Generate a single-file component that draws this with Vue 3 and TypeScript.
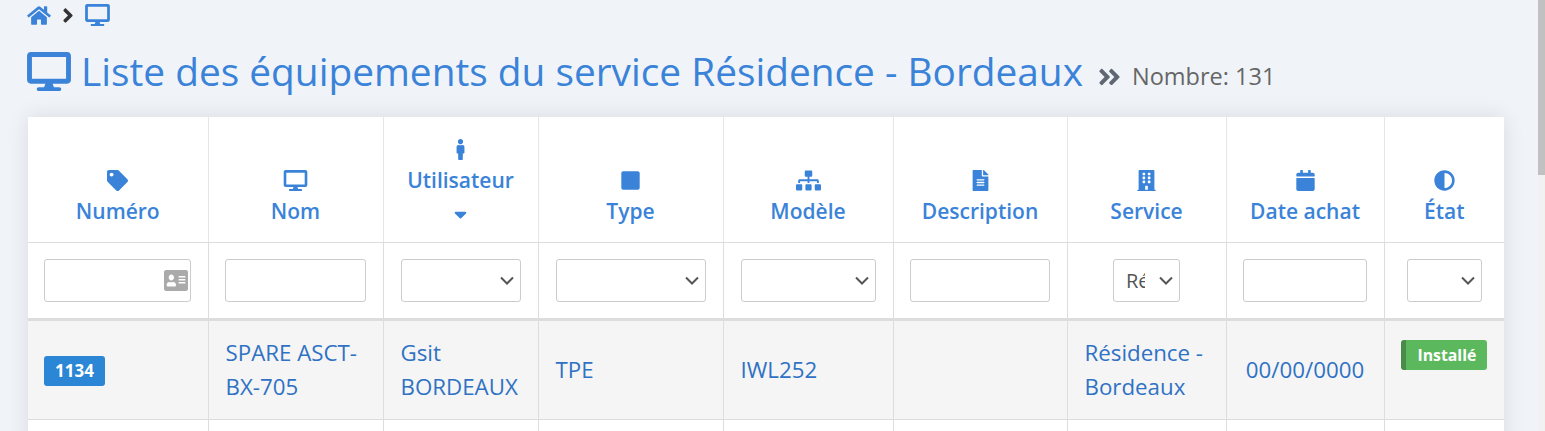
<script setup lang="ts">
interface Column {
  label: string
  width: number
  vb: string
  icon: string
  sorted?: boolean
}

const desktop =
  'M528 0H48C21.5 0 0 21.5 0 48v320c0 26.5 21.5 48 48 48h192l-16 48h-72c-13.3 0-24 10.7-24 24s10.7 24 24 24h272c13.3 0 24-10.7 24-24s-10.7-24-24-24h-72l-16-48h192c26.5 0 48-21.5 48-48V48c0-26.5-21.5-48-48-48zm-16 352H64V64h448v288z'
const home =
  'M280.37 148.26L96 300.11V464a16 16 0 0 0 16 16l112.06-.29a16 16 0 0 0 15.92-16V368a16 16 0 0 1 16-16h64a16 16 0 0 1 16 16v95.64a16 16 0 0 0 16 16.05L464 480a16 16 0 0 0 16-16V300L295.67 148.26a12.19 12.19 0 0 0-15.3 0zM571.6 251.47L488 182.56V44.05a12 12 0 0 0-12-12h-56a12 12 0 0 0-12 12v72.61L318.47 43a48 48 0 0 0-61 0L4.34 251.47a12 12 0 0 0-1.6 16.9l25.5 31A12 12 0 0 0 45.15 301l235.22-193.74a12.19 12.19 0 0 1 15.3 0L530.9 301a12 12 0 0 0 16.9-1.6l25.5-31a12 12 0 0 0-1.7-16.93z'
const angleRight =
  'M224.3 273l-136 136c-9.4 9.4-24.6 9.4-33.9 0l-22.6-22.6c-9.4-9.4-9.4-24.6 0-33.9l96.4-96.4-96.4-96.4c-9.4-9.4-9.4-24.6 0-33.9L54.3 103c9.4-9.4 24.6-9.4 33.9 0l136 136c9.5 9.4 9.5 24.6.1 34z'
const angleDouble =
  'M224.3 273l-136 136c-9.4 9.4-24.6 9.4-33.9 0l-22.6-22.6c-9.4-9.4-9.4-24.6 0-33.9l96.4-96.4-96.4-96.4c-9.4-9.4-9.4-24.6 0-33.9L54.3 103c9.4-9.4 24.6-9.4 33.9 0l136 136c9.5 9.4 9.5 24.6.1 34zm192-34l-136-136c-9.4-9.4-24.6-9.4-33.9 0l-22.6 22.6c-9.4 9.4-9.4 24.6 0 33.9l96.4 96.4-96.4 96.4c-9.4 9.4-9.4 24.6 0 33.9l22.6 22.6c9.4 9.4 24.6 9.4 33.9 0l136-136c9.4-9.2 9.4-24.4 0-33.8z'
const idCard =
  'M528 32H48C21.5 32 0 53.5 0 80v352c0 26.5 21.5 48 48 48h480c26.5 0 48-21.5 48-48V80c0-26.5-21.5-48-48-48zm-352 96c35.3 0 64 28.7 64 64s-28.7 64-64 64-64-28.7-64-64 28.7-64 64-64zm112 236.8c0 10.6-10 19.2-22.4 19.2H86.4C74 384 64 375.4 64 364.8v-19.2c0-31.8 30.1-57.6 67.2-57.6h5c12.3 5.1 25.7 8 39.8 8s27.6-2.9 39.8-8h5c37.1 0 67.2 25.8 67.2 57.6v19.2zM512 312c0 4.4-3.6 8-8 8H360c-4.4 0-8-3.6-8-8v-16c0-4.4 3.6-8 8-8h144c4.4 0 8 3.6 8 8v16zm0-64c0 4.4-3.6 8-8 8H360c-4.4 0-8-3.6-8-8v-16c0-4.4 3.6-8 8-8h144c4.4 0 8 3.6 8 8v16zm0-64c0 4.4-3.6 8-8 8H360c-4.4 0-8-3.6-8-8v-16c0-4.4 3.6-8 8-8h144c4.4 0 8 3.6 8 8v16z'
const caret = 'M41 288h238c21.4 0 32.1 25.9 17 41L177 448c-9.4 9.4-24.6 9.4-33.9 0L24 329c-15.1-15.1-4.4-41 17-41z'

const columns: Column[] = [
  {
    label: 'Numéro',
    width: 180,
    vb: '0 0 512 512',
    icon: 'M0 252.118V48C0 21.49 21.49 0 48 0h204.118a48 48 0 0 1 33.941 14.059l211.882 211.882c18.745 18.745 18.745 49.137 0 67.882L293.823 497.941c-18.745 18.745-49.137 18.745-67.882 0L14.059 286.059A48 48 0 0 1 0 252.118zM112 64c-26.51 0-48 21.49-48 48s21.49 48 48 48 48-21.49 48-48-21.49-48-48-48z',
  },
  { label: 'Nom', width: 175, vb: '0 0 576 512', icon: desktop },
  {
    label: 'Utilisateur',
    width: 155,
    vb: '0 0 192 512',
    sorted: true,
    icon: 'M96 0c35.346 0 64 28.654 64 64s-28.654 64-64 64-64-28.654-64-64S60.654 0 96 0m48 144h-11.36c-22.711 10.443-49.59 10.894-73.28 0H48c-26.51 0-48 21.49-48 48v136c0 13.255 10.745 24 24 24h16v136c0 13.255 10.745 24 24 24h64c13.255 0 24-10.745 24-24V352h16c13.255 0 24-10.745 24-24V192c0-26.51-21.49-48-48-48z',
  },
  {
    label: 'Type',
    width: 185,
    vb: '0 0 448 512',
    icon: 'M400 32H48C21.5 32 0 53.5 0 80v352c0 26.5 21.5 48 48 48h352c26.5 0 48-21.5 48-48V80c0-26.5-21.5-48-48-48z',
  },
  {
    label: 'Modèle',
    width: 170,
    vb: '0 0 640 512',
    icon: 'M128 352H32c-17.67 0-32 14.33-32 32v96c0 17.67 14.33 32 32 32h96c17.67 0 32-14.33 32-32v-96c0-17.67-14.33-32-32-32zm-24-80h192v48h48v-48h192v48h48v-57.59c0-21.17-17.23-38.41-38.41-38.41H344v-64h40c17.67 0 32-14.33 32-32V32c0-17.67-14.33-32-32-32H256c-17.67 0-32 14.33-32 32v96c0 17.67 14.33 32 32 32h40v64H94.41C73.23 224 56 241.23 56 262.41V320h48v-48zm264 80h-96c-17.67 0-32 14.33-32 32v96c0 17.67 14.33 32 32 32h96c17.67 0 32-14.33 32-32v-96c0-17.67-14.33-32-32-32zm240 0h-96c-17.67 0-32 14.33-32 32v96c0 17.67 14.33 32 32 32h96c17.67 0 32-14.33 32-32v-96c0-17.67-14.33-32-32-32z',
  },
  {
    label: 'Description',
    width: 174,
    vb: '0 0 384 512',
    icon: 'M224 136V0H24C10.7 0 0 10.7 0 24v464c0 13.3 10.7 24 24 24h336c13.3 0 24-10.7 24-24V160H248c-13.2 0-24-10.8-24-24zm64 236c0 6.6-5.4 12-12 12H108c-6.6 0-12-5.4-12-12v-8c0-6.6 5.4-12 12-12h168c6.6 0 12 5.4 12 12v8zm0-64c0 6.6-5.4 12-12 12H108c-6.6 0-12-5.4-12-12v-8c0-6.6 5.4-12 12-12h168c6.6 0 12 5.4 12 12v8zm0-72v8c0 6.6-5.4 12-12 12H108c-6.6 0-12-5.4-12-12v-8c0-6.6 5.4-12 12-12h168c6.6 0 12 5.4 12 12zm96-114.1v6.1H256V0h6.1c6.4 0 12.5 2.5 17 7l97.9 98c4.5 4.5 7 10.6 7 16.9z',
  },
  {
    label: 'Service',
    width: 159,
    vb: '0 0 448 512',
    icon: 'M436 480h-20V24c0-13.255-10.745-24-24-24H56C42.745 0 32 10.745 32 24v456H12c-6.627 0-12 5.373-12 12v20h448v-20c0-6.627-5.373-12-12-12zM128 76c0-6.627 5.373-12 12-12h40c6.627 0 12 5.373 12 12v40c0 6.627-5.373 12-12 12h-40c-6.627 0-12-5.373-12-12V76zm0 96c0-6.627 5.373-12 12-12h40c6.627 0 12 5.373 12 12v40c0 6.627-5.373 12-12 12h-40c-6.627 0-12-5.373-12-12v-40zm52 148h-40c-6.627 0-12-5.373-12-12v-40c0-6.627 5.373-12 12-12h40c6.627 0 12 5.373 12 12v40c0 6.627-5.373 12-12 12zm76 160h-64v-84c0-6.627 5.373-12 12-12h40c6.627 0 12 5.373 12 12v84zm64-172c0 6.627-5.373 12-12 12h-40c-6.627 0-12-5.373-12-12v-40c0-6.627 5.373-12 12-12h40c6.627 0 12 5.373 12 12v40zm0-96c0 6.627-5.373 12-12 12h-40c-6.627 0-12-5.373-12-12v-40c0-6.627 5.373-12 12-12h40c6.627 0 12 5.373 12 12v40zm0-96c0 6.627-5.373 12-12 12h-40c-6.627 0-12-5.373-12-12V76c0-6.627 5.373-12 12-12h40c6.627 0 12 5.373 12 12v40z',
  },
  {
    label: 'Date achat',
    width: 158,
    vb: '0 0 448 512',
    icon: 'M12 192h424c6.6 0 12 5.4 12 12v260c0 26.5-21.5 48-48 48H48c-26.5 0-48-21.5-48-48V204c0-6.6 5.4-12 12-12zm436-44v-36c0-26.5-21.5-48-48-48h-48V12c0-6.6-5.4-12-12-12h-40c-6.6 0-12 5.4-12 12v52H160V12c0-6.6-5.4-12-12-12h-40c-6.6 0-12 5.4-12 12v52H48C21.5 64 0 85.5 0 112v36c0 6.6 5.4 12 12 12h424c6.6 0 12-5.4 12-12z',
  },
  {
    label: 'État',
    width: 120,
    vb: '0 0 512 512',
    icon: 'M8 256c0 136.966 111.033 248 248 248s248-111.034 248-248S392.966 8 256 8 8 119.033 8 256zm248 184V72c101.705 0 184 82.311 184 184 0 101.705-82.311 184-184 184z',
  },
]
</script>

<template>
  <div class="page">
    <nav class="crumbs">
      <svg class="crumb-home" viewBox="0 0 576 512"><path :d="home" /></svg>
      <svg class="crumb-sep" viewBox="0 0 256 512"><path :d="angleRight" /></svg>
      <svg class="crumb-desk" viewBox="0 0 576 512"><path :d="desktop" /></svg>
    </nav>

    <div class="heading">
      <svg class="heading-icon" viewBox="0 0 576 512"><path :d="desktop" /></svg>
      <h1>Liste des équipements du service Résidence - Bordeaux</h1>
      <svg class="heading-sep" viewBox="0 0 448 512"><path :d="angleDouble" /></svg>
      <span class="count">Nombre: 131</span>
    </div>

    <div class="card">
      <table>
        <colgroup>
          <col v-for="col in columns" :key="col.label" :style="{ width: col.width + 'px' }" />
        </colgroup>
        <thead>
          <tr class="head-row">
            <th v-for="col in columns" :key="col.label">
              <span class="head-line">
                <svg class="head-icon" :viewBox="col.vb"><path :d="col.icon" /></svg>
              </span>
              <span class="head-line">{{ col.label }}</span>
              <span v-if="col.sorted" class="head-line">
                <svg class="sort-icon" viewBox="0 280 320 176"><path :d="caret" /></svg>
              </span>
            </th>
          </tr>
          <tr class="filter-row">
            <td>
              <div class="with-icon">
                <input type="text" />
                <svg class="id-icon" viewBox="0 32 576 448" preserveAspectRatio="none"><path :d="idCard" /></svg>
              </div>
            </td>
            <td><input type="text" /></td>
            <td><select><option></option></select></td>
            <td><select><option></option></select></td>
            <td><select><option></option></select></td>
            <td><input type="text" /></td>
            <td>
              <select class="narrow-service"><option>Résidence - Bordeaux</option></select>
            </td>
            <td><input type="text" /></td>
            <td><select class="narrow-state"><option></option></select></td>
          </tr>
        </thead>
        <tbody>
          <tr class="row-odd">
            <td><span class="num-badge">1134</span></td>
            <td><a>SPARE ASCT-BX-705</a></td>
            <td><a>Gsit BORDEAUX</a></td>
            <td><a>TPE</a></td>
            <td><a>IWL252</a></td>
            <td></td>
            <td><a>Résidence - Bordeaux</a></td>
            <td class="centered"><a>00/00/0000</a></td>
            <td class="state-cell"><span class="state-badge">Installé</span></td>
          </tr>
          <tr class="row-even">
            <td v-for="col in columns" :key="col.label"></td>
          </tr>
        </tbody>
      </table>
    </div>

    <div class="scrollbar"><div class="scrollbar-thumb"></div></div>
  </div>
</template>

<style>
html,
body {
  margin: 0;
  height: 431px;
  overflow: hidden;
  background: #f0f4f8;
}
</style>

<style scoped>
.page {
  padding: 4px 41px 0 28px;
  font-family: 'Open Sans', sans-serif;
  color: #3a83d8;
}

.crumbs {
  display: flex;
  align-items: center;
  height: 22px;
}

.crumbs svg {
  display: block;
  fill: #3a83d8;
}

.crumb-home {
  width: 24px;
  height: 21px;
  margin-left: -1px;
}

.crumbs .crumb-sep {
  width: 12px;
  height: 23px;
  margin-left: 11px;
  fill: #333;
}

.crumb-desk {
  width: 25px;
  height: 22px;
  margin-left: 11px;
}

.heading {
  display: flex;
  align-items: center;
  height: 50px;
  margin-top: 20px;
}

.heading-icon {
  width: 44px;
  height: 39px;
  margin-left: -1px;
  fill: #3a83d8;
}

h1 {
  margin: 0 0 0 10px;
  font-size: 38.8px;
  font-weight: 400;
  line-height: 50px;
  white-space: nowrap;
}

.heading-sep {
  width: 23px;
  height: 26px;
  margin: 11px 0 0 15px;
  fill: #5f6772;
}

.count {
  margin: 10px 0 0 11px;
  font-size: 23.5px;
  color: #666;
}

.card {
  margin-top: 21px;
  background: #fff;
  box-shadow: 0 0 20px rgba(0, 0, 0, 0.1);
}

table {
  width: 1476px;
  table-layout: fixed;
  border-collapse: collapse;
}

th,
td {
  padding: 16px 17px;
  border-right: 1px solid #ddd;
  box-sizing: border-box;
}

th:last-child,
td:last-child {
  border-right: none;
}

th {
  vertical-align: bottom;
  text-align: center;
  font-size: 21px;
  font-weight: 600;
  border-right-color: #e6e6e6;
  border-bottom: 1px solid #ddd;
}

.head-line {
  display: flex;
  align-items: center;
  justify-content: center;
  height: 31px;
  white-space: nowrap;
}

.head-icon {
  width: 25px;
  height: 21px;
  margin-top: 2px;
  fill: #3a83d8;
}

.sort-icon {
  width: 13px;
  height: 8px;
  margin-top: 8px;
  fill: #3a83d8;
}

.filter-row td {
  height: 76px;
  text-align: center;
  border-bottom: 3px solid #ddd;
}

input,
select {
  display: block;
  width: 100%;
  height: 43px;
  box-sizing: border-box;
  padding: 6px 12px;
  margin: 0 auto;
  font-family: inherit;
  font-size: 20px;
  color: #555;
  background: #fff;
  border: 1px solid #ccc;
  border-radius: 3px;
}

input {
  width: calc(100% + 1px);
  margin-left: -1px;
}

select {
  appearance: none;
  padding-right: 34px;
  background-image: url("data:image/svg+xml,%3Csvg xmlns='http://www.w3.org/2000/svg' viewBox='0 0 14 9'%3E%3Cpath d='M1 1.5l6 6 6-6' fill='none' stroke='%23555' stroke-width='2'/%3E%3C/svg%3E");
  background-repeat: no-repeat;
  background-position: right 6px center;
  background-size: 14px 9px;
}

.with-icon {
  position: relative;
}

.id-icon {
  position: absolute;
  top: 11px;
  right: 3px;
  width: 24px;
  height: 21px;
  fill: #aaa;
}

.narrow-service {
  width: 67px;
}

.narrow-state {
  width: 75px;
}

tbody td {
  height: 99px;
  padding-top: 15px;
  padding-bottom: 15px;
  font-size: 22.3px;
  line-height: 34px;
  vertical-align: middle;
  border-bottom: 1px solid #ddd;
}

a {
  color: #2f72c4;
}

.row-odd td {
  background: #f5f5f5;
}

tbody td.centered {
  text-align: center;
  padding-left: 10px;
  padding-right: 10px;
}

tbody td.state-cell {
  vertical-align: top;
  padding: 19px 0 0 16px;
}

.num-badge,
.state-badge {
  display: inline-block;
  height: 30px;
  box-sizing: border-box;
  font-weight: 700;
  line-height: 30px;
  color: #fff;
  border-radius: 3px;
  vertical-align: top;
}

.num-badge {
  width: 61px;
  margin: 3px 0 0 -1px;
  font-size: 17px;
  text-align: center;
  background: #2b86d5;
}

.state-badge {
  width: 86px;
  padding-left: 12px;
  font-size: 15.8px;
  background: #5cb85c;
  border-left: 5px solid #4a8a4a;
}

.scrollbar {
  position: absolute;
  top: 0;
  right: 0;
  width: 7px;
  height: 431px;
  background: #f1f1f1;
}

.scrollbar-thumb {
  height: 175px;
  background: #c1c1c1;
}
</style>
